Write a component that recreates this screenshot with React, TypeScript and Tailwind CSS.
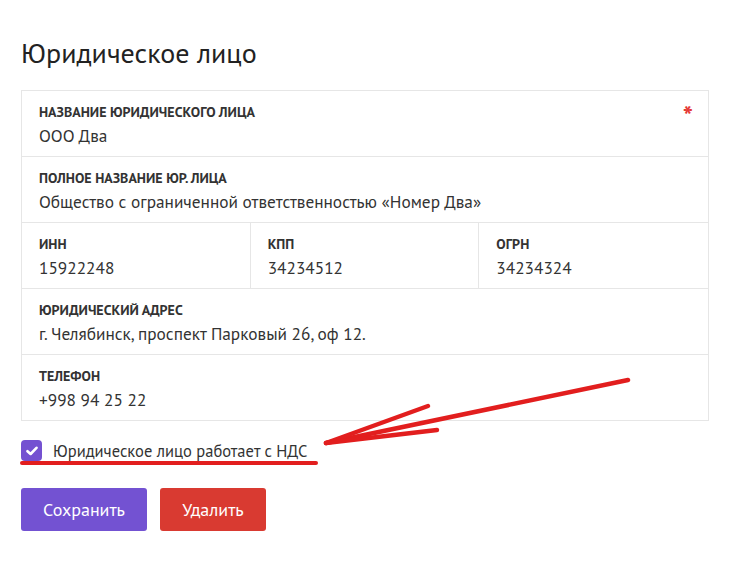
import React from "react";

const Field = ({ label, value, extra }: { label: string; value: string; extra?: React.ReactNode }) => (
  <div className="relative pl-[17px] pr-4 pt-[13px] pb-[9px]">
    <div className="text-[14px] leading-[17px] font-bold uppercase text-[#333] mb-[4px]">{label}</div>
    <div className="text-[17.3px] leading-[22px] text-[#333]">{value}</div>
    {extra}
  </div>
);

export default function App() {
  return (
    <div className="relative w-[730px] h-[562px] bg-white" style={{ fontFamily: '"PT Sans", "Noto Sans", sans-serif' }}>
      <div className="px-[21px] pt-[35px]">
        <h1 className="text-[28px] leading-[36px] text-[#222] mb-[19px]">Юридическое лицо</h1>
        <div className="border border-[#e6e6e6] w-[688px]">
          <div className="border-b border-[#e6e6e6]">
            <Field
              label="Название юридического лица"
              value="ООО Два"
              extra={<span className="absolute right-[15px] top-[12px] text-[#e53935] text-[27px] leading-[27px] font-bold">*</span>}
            />
          </div>
          <div className="border-b border-[#e6e6e6]">
            <Field label="Полное название юр. лица" value="Общество с ограниченной ответственностью «Номер Два»" />
          </div>
          <div className="grid grid-cols-3 border-b border-[#e6e6e6]">
            <div className="border-r border-[#e6e6e6]"><Field label="ИНН" value="15922248" /></div>
            <div className="border-r border-[#e6e6e6]"><Field label="КПП" value="34234512" /></div>
            <div><Field label="ОГРН" value="34234324" /></div>
          </div>
          <div className="border-b border-[#e6e6e6]">
            <Field label="Юридический адрес" value="г. Челябинск, проспект Парковый 26, оф 12." />
          </div>
          <div>
            <Field label="Телефон" value="+998 94 25 22" />
          </div>
        </div>
        <div className="flex items-center gap-[11px] mt-[19px] h-[21px]">
          <div className="w-[21px] h-[21px] rounded-[4px] bg-[#7451d1] flex items-center justify-center">
            <svg width="12" height="10" viewBox="0 0 12 10">
              <path d="M1.5 5.2 L4.6 8 L10.5 1.8" fill="none" stroke="white" strokeWidth="2.6" strokeLinecap="round" strokeLinejoin="round" />
            </svg>
          </div>
          <span className="text-[16.5px] leading-[20px] text-[#333]">Юридическое лицо работает с НДС</span>
        </div>
        <div className="flex gap-[13px] mt-[27px]">
          <button className="w-[126px] h-[43px] rounded-[3px] bg-[#7352d2] text-white text-[18px]">Сохранить</button>
          <button className="w-[106px] h-[43px] rounded-[3px] bg-[#d93a31] text-white text-[18px]">Удалить</button>
        </div>
      </div>
      <svg className="absolute left-0 top-0 pointer-events-none" width="730" height="562" viewBox="0 0 730 562">
        <g stroke="#e21e1e" strokeLinecap="round" strokeLinejoin="round" fill="none">
          <path d="M22 463 L316 463" strokeWidth="4" />
          <path d="M628 380 L326 443" strokeWidth="4.5" />
          <path d="M326 443 L428 406" strokeWidth="4.5" />
          <path d="M326 443 L437 430" strokeWidth="4.5" />
        </g>
      </svg>
    </div>
  );
}
